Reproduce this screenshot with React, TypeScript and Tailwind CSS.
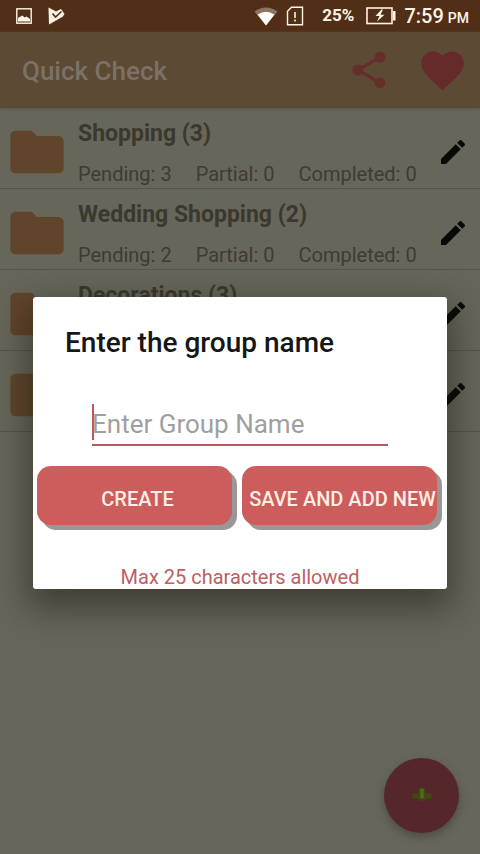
import React from "react";

type Group = { name?: string; total?: number; pending?: number };

const groups: Group[] = [
  { name: "Shopping", total: 3, pending: 3 },
  { name: "Wedding Shopping", total: 2, pending: 2 },
  { name: "Decorations", total: 3 },
  {},
];

function Icon({ d, className }: { d: string; className: string }) {
  return (
    <svg viewBox="0 0 24 24" fill="currentColor" aria-hidden="true" className={className}>
      <path d={d} />
    </svg>
  );
}

const sharePath =
  "M18 16.08c-.76 0-1.44.3-1.96.77L8.91 12.7c.05-.23.09-.46.09-.7s-.04-.47-.09-.7l7.05-4.11c.54.5 1.25.81 2.04.81 1.66 0 3-1.34 3-3s-1.34-3-3-3-3 1.34-3 3c0 .24.04.47.09.7L8.04 9.81C7.5 9.31 6.79 9 6 9c-1.66 0-3 1.34-3 3s1.34 3 3 3c.79 0 1.5-.31 2.04-.81l7.12 4.16c-.05.21-.08.43-.08.65 0 1.61 1.31 2.92 2.92 2.92s2.92-1.31 2.92-2.92-1.31-2.92-2.92-2.92z";
const heartPath =
  "M12 21.35l-1.45-1.32C5.4 15.36 2 12.28 2 8.5 2 5.42 4.42 3 7.5 3c1.74 0 3.41.81 4.5 2.09C13.09 3.81 14.76 3 16.5 3 19.58 3 22 5.42 22 8.5c0 3.78-3.4 6.86-8.55 11.54L12 21.35z";
const folderPath =
  "M10 4H4c-1.1 0-1.99.9-1.99 2L2 18c0 1.1.9 2 2 2h16c1.1 0 2-.9 2-2V8c0-1.1-.9-2-2-2h-8l-2-2z";
const pencilPath =
  "M3 17.25V21h3.75L17.81 9.94l-3.75-3.75L3 17.25zM20.71 7.04c.39-.39.39-1.02 0-1.41l-2.34-2.34c-.39-.39-1.02-.39-1.41 0l-1.83 1.83 3.75 3.75 1.83-1.83z";

function StatusBar() {
  return (
    <div className="flex h-8 items-center justify-between bg-[#512f17] pl-4 pr-[11px] text-[#fff3e6]">
      <div className="flex items-center gap-4">
        <svg viewBox="0 0 16 16" className="size-4" aria-hidden="true">
          <rect x="0.8" y="0.8" width="14.4" height="14.4" fill="none" stroke="currentColor" strokeWidth="1.4" />
          <path d="M2 13.500V10l2.500-1.500 2-1 2 2 2-1 3.500 2.500v2.500z" fill="currentColor" />
        </svg>
        <svg viewBox="0 0 17 18" className="h-[18px] w-[17px]" aria-hidden="true">
          <path d="M0.5 0.5 L8 4.5 L13 2 L16.5 7 L15 9.5 L1 17.5 Z" fill="currentColor" />
          <path d="M4.5 6.5 L7.5 10 L13.5 4.500" fill="none" stroke="#512f17" strokeWidth="1.6" />
        </svg>
      </div>
      <div className="flex items-center">
        <svg viewBox="0 0 24 19" className="h-[19px] w-6" aria-hidden="true">
          <path d="M0.5 4.5Q12-3.5 23.5 4.5L12 18.5z" fill="#8e7460" />
          <path d="M3.5 7.5Q12 2 20.5 7.5L12 18.5z" fill="#fffdf8" />
        </svg>
        <svg viewBox="0 0 18 20" className="ml-2 h-5 w-[18px]" aria-hidden="true">
          <path d="M5.5 1.2H16.5V18.8H1.5V5.2z" fill="none" stroke="currentColor" strokeWidth="1.4" />
          <path d="M9 6v6M9 13.5v2" stroke="currentColor" strokeWidth="1.6" />
        </svg>
        <span className="ml-[18px] text-[17px] font-bold">25%</span>
        <svg viewBox="0 0 30 18" className="ml-3 h-[18px] w-[30px]" aria-hidden="true">
          <rect x="1" y="1" width="25" height="15.5" fill="none" stroke="currentColor" strokeWidth="1.6" />
          <path d="M27 4h2.5v9.5H27z" fill="currentColor" />
          <path d="M15.5 2.5L9.5 9h4l-2.500 5.500L18.500 7.800h-4L17 2.500z" fill="currentColor" />
        </svg>
        <span className="ml-2 text-xl font-medium">7:59</span>
        <span className="ml-1 pt-1 text-sm font-medium">PM</span>
      </div>
    </div>
  );
}

function GroupRow({ group }: { group: Group }) {
  return (
    <li className="flex h-[81px] items-center border-b border-[#58564b] pt-2 pl-[5px] pr-[11px]">
      <Icon d={folderPath} className="size-16 shrink-0 text-[#61452b]" />
      <div className="ml-[9px] grow pt-1">
        {group.name && (
          <h2 className="text-[23px] leading-8 font-bold text-[#3b382e]">
            {group.name} ({group.total})
          </h2>
        )}
        <p className="mt-2 flex h-8 gap-6 text-xl leading-8 text-[#3f3c31]">
          {group.pending !== undefined && (
            <>
              <span>Pending: {group.pending}</span>
              <span>Partial: 0</span>
              <span>Completed: 0</span>
            </>
          )}
        </p>
      </div>
      <button type="button" aria-label="Edit group" className="shrink-0">
        <Icon d={pencilPath} className="size-8 text-[#090906]" />
      </button>
    </li>
  );
}

export default function App() {
  return (
    <div className="relative flex min-h-screen flex-col bg-[#67665a] font-['Roboto',sans-serif]">
      <StatusBar />
      <header className="flex h-[76px] items-center bg-[#5c4a34] pl-[22px] pr-3 shadow-[0_1px_3px_#4f5848]">
        <h1 className="grow pt-0.5 text-[26px] font-medium text-[#7c7167]">Quick Check</h1>
        <button type="button" aria-label="Share">
          <Icon d={sharePath} className="size-11 text-[#652e2b]" />
        </button>
        <button type="button" aria-label="Favorite" className="ml-[26px]">
          <Icon d={heartPath} className="size-[51px] text-[#652b2b]" />
        </button>
      </header>
      <ul>
        {groups.map((g, i) => (
          <GroupRow key={i} group={g} />
        ))}
      </ul>

      <button
        type="button"
        aria-label="Add group"
        className="absolute right-[21px] bottom-[21px] flex size-[75px] items-center justify-center rounded-full bg-[#55272a] shadow-[0_4px_10px_#4b4d42]"
      >
        <svg viewBox="0 0 20 16" className="h-5 w-6" aria-hidden="true">
          <path d="M8 1h4l1.500 5H18v4.500h-5.500v1.500h-5v-1.500H2V6h4.500z" fill="#414710" />
          <path d="M8.500 2h3v8h-3z" fill="#50691a" />
        </svg>
      </button>

      <div className="absolute inset-0 flex items-center justify-center px-[33px] pt-8">
        <form
          role="dialog"
          aria-labelledby="dialog-title"
          onSubmit={(e) => e.preventDefault()}
          className="w-full max-w-lg rounded-[3px] bg-white shadow-[0_14px_34px_6px_rgba(25,25,12,0.5)]"
        >
          <h2 id="dialog-title" className="px-8 pt-7 text-[28px] leading-9 font-medium text-[#161616]">
            Enter the group name
          </h2>
          <div className="mx-[59px] mt-[43px] flex items-center border-b-2 border-[#b9575b] pb-1">
            <span className="h-9 w-0.5 shrink-0 bg-[#b9575b]" />
            <input
              type="text"
              maxLength={25}
              aria-label="Group name"
              placeholder="Enter Group Name"
              className="-ml-0.5 h-9 w-full min-w-0 pt-1 text-[26px] outline-none placeholder:text-[#9f9f9f]"
            />
          </div>
          <div className="mt-5 grid grid-cols-2 gap-2.5 pr-2.5 pl-1 text-xl font-medium text-[#ffeee4]">
            <button
              type="submit"
              className="h-[59px] rounded-[14px] bg-[#cd5c5c] pt-1.5 pl-1.5 whitespace-nowrap shadow-[5px_5px_0_#999897]"
            >
              CREATE
            </button>
            <button
              type="button"
              className="h-[59px] rounded-[14px] bg-[#cd5c5c] pt-1.5 pl-1.5 whitespace-nowrap shadow-[5px_5px_0_#999897]"
            >
              SAVE AND ADD NEW
            </button>
          </div>
          <p className="mt-10 text-center text-xl leading-6 text-[#bd5e65]">Max 25 characters allowed</p>
        </form>
      </div>
    </div>
  );
}
